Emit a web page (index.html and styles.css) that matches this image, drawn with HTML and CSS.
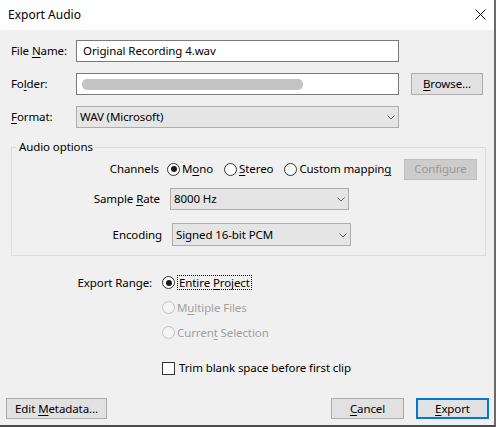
FILE: index.html
```html
<!DOCTYPE html>
<html>
<head>
<meta charset="utf-8">
<link rel="stylesheet" href="styles.css">
</head>
<body>
<div class="window">
  <div class="titlebar">
    <span class="title">Export Audio</span>
    <svg class="close" width="11" height="11" viewBox="0 0 11 11"><path d="M0.5 0.5 L10.5 10.5 M10.5 0.5 L0.5 10.5" stroke="#000" stroke-width="1" fill="none"/></svg>
  </div>
  <div class="content">
    <div class="filegrid">
      <span class="lbl">File <u>N</u>ame:</span>
      <div class="input"><span>Original Recording 4.wav</span></div>
      <span></span>
      <span class="lbl">Fo<u>l</u>der:</span>
      <div class="input"><div class="blur"></div></div>
      <button class="btn browse"><u>B</u>rowse...</button>
      <span class="lbl"><u>F</u>ormat:</span>
      <div class="select"><span>WAV (Microsoft)</span><svg class="chev" width="8" height="5" viewBox="0 0 8 5"><polyline points="0.5,0.5 4,4 7.5,0.5" fill="none" stroke="#606060" stroke-width="1"/></svg></div>
      <span></span>
    </div>

    <fieldset class="group">
      <legend>Audio options</legend>
      <div class="grow channels">
        <span class="glbl">Channels</span>
        <span class="opt"><span class="radio on"></span><span>M<u>o</u>no</span></span>
        <span class="opt"><span class="radio"></span><span><u>S</u>tereo</span></span>
        <span class="opt"><span class="radio"></span><span>Custom mappin<u>g</u></span></span>
        <button class="btn disabled configure">Configure</button>
      </div>
      <div class="grow rate">
        <span class="glbl">Sample <u>R</u>ate</span>
        <div class="select small"><span>8000 Hz</span><svg class="chev" width="8" height="5" viewBox="0 0 8 5"><polyline points="0.5,0.5 4,4 7.5,0.5" fill="none" stroke="#606060" stroke-width="1"/></svg></div>
      </div>
      <div class="grow enc">
        <span class="glbl">Encoding</span>
        <div class="select small tall"><span>Signed 16-bit PCM</span><svg class="chev" width="8" height="5" viewBox="0 0 8 5"><polyline points="0.5,0.5 4,4 7.5,0.5" fill="none" stroke="#606060" stroke-width="1"/></svg></div>
      </div>
    </fieldset>

    <div class="range">
      <span class="rlbl">Export Range:</span>
      <span class="opt"><span class="radio on"></span><span class="focus">Entire <u>P</u>roject</span></span>
      <span></span>
      <span class="opt off"><span class="radio"></span><span>M<u>u</u>ltiple Files</span></span>
      <span></span>
      <span class="opt off"><span class="radio"></span><span>Curren<u>t</u> Selection</span></span>
      <span></span>
      <span class="opt check-row"><span class="check"></span><span>Trim blank space before first clip</span></span>
    </div>

    <div class="footer">
      <button class="btn meta">Edit <u>M</u>etadata...</button>
      <span class="spacer"></span>
      <button class="btn cancel"><u>C</u>ancel</button>
      <button class="btn export default"><u>E</u>xport</button>
    </div>
  </div>
</div>
</body>
</html>
```
FILE: styles.css
```css
html, body {
  margin: 0;
  padding: 0;
}
body {
  width: 496px;
  height: 427px;
  overflow: hidden;
  font-family: "Noto Sans", "Open Sans", sans-serif;
  font-size: 11.5px;
  letter-spacing: -0.1px;
  line-height: 16px;
  color: #000;
  background: #f0f0f0;
}
u {
  text-decoration: underline;
  text-underline-offset: 2px;
  text-decoration-thickness: 1px;
}
.window {
  width: 496px;
  height: 427px;
  box-sizing: border-box;
  border-right: 2px solid #6a6a6a;
  border-bottom: 2px solid #4a4a4a;
  background: #f0f0f0;
  display: flex;
  flex-direction: column;
}
.titlebar {
  height: 30px;
  background: #fff;
  display: flex;
  align-items: center;
  justify-content: space-between;
  padding: 0 8px 0 8px;
  flex: none;
}
.title {
  font-size: 12px;
  letter-spacing: 0;
}
.close {
  display: block;
  margin-top: -1px;
}
.content {
  display: flex;
  flex-direction: column;
  padding-top: 10px;
}
.filegrid {
  display: grid;
  grid-template-columns: 65px 323px 84px;
  grid-template-rows: 22px 22px 22px;
  row-gap: 11px;
  padding-left: 11px;
  align-items: center;
}
.lbl {
  white-space: nowrap;
}
.input {
  height: 22px;
  box-sizing: border-box;
  border: 1px solid #7a7a7a;
  background: #fff;
  padding: 2px 6px;
  display: flex;
  align-items: center;
  white-space: nowrap;
}
.blur {
  width: 221px;
  height: 11px;
  margin-left: -1px;
  border-radius: 5px;
  background: #c4c4c4;
  filter: blur(0.6px);
}
.btn {
  font: inherit;
  letter-spacing: inherit;
  color: #000;
  background: #e1e1e1;
  border: 1px solid #adadad;
  height: 21px;
  padding: 0;
  box-sizing: border-box;
  line-height: 16px;
}
.browse {
  width: 72px;
  height: 22px;
  justify-self: end;
}
.select {
  height: 22px;
  box-sizing: border-box;
  border: 1px solid #adadad;
  background: #e5e5e5;
  padding: 0 3px;
  display: flex;
  align-items: center;
  justify-content: space-between;
  white-space: nowrap;
}
.select .chev {
  margin-top: 1px;
}
.select.small {
  width: 179px;
}
.select.tall {
  height: 23px;
}
.group {
  margin: 11px 8px 14px 11px;
  padding: 3px 0 9px 0;
  border: 1px solid #dcdcdc;
  min-width: 0;
  display: flex;
  flex-direction: column;
}
.group legend {
  margin-left: 5px;
  padding: 0 2px;
  line-height: 16px;
}
.grow {
  display: flex;
  align-items: center;
  height: 22px;
}
.glbl {
  width: 148px;
  text-align: right;
  white-space: nowrap;
  flex: none;
}
.channels .glbl {
  width: 147px;
  margin-right: 8px;
}
.rate {
  margin-top: 8px;
}
.rate .glbl {
  margin-right: 10px;
}
.enc {
  margin-top: 13px;
  height: 23px;
}
.enc .glbl {
  width: 150px;
  margin-right: 10px;
}
.opt {
  display: flex;
  align-items: center;
  white-space: nowrap;
  margin-right: 11px;
}
.radio {
  width: 13px;
  height: 13px;
  box-sizing: border-box;
  border: 1px solid #333;
  border-radius: 50%;
  background: #fff;
  margin-right: 2px;
  position: relative;
  flex: none;
}
.radio.on::after {
  content: "";
  position: absolute;
  left: 2.5px;
  top: 2.5px;
  width: 6px;
  height: 6px;
  border-radius: 50%;
  background: #1a1a1a;
}
.opt.off {
  color: #a0a0a0;
}
.opt.off .radio {
  border-color: #c2c2c2;
  background: #f4f4f4;
}
.configure {
  width: 73px;
  height: 21px;
  background: #cccccc;
  border-color: #bfbfbf;
  color: #9a9a9a;
  margin-left: auto;
  margin-right: 8px;
}
.range {
  display: grid;
  grid-template-columns: 162px auto;
  grid-template-rows: 25px 25px 25px 35px;
  align-items: center;
}
.rlbl {
  justify-self: end;
  padding-right: 10px;
  white-space: nowrap;
}
.focus {
  outline: 1px dotted #000;
  outline-offset: 0;
  padding: 0 1px;
  margin-left: 1px;
  line-height: 13px;
}
.check-row {
  align-self: end;
  height: 24px;
}
.check {
  width: 13px;
  height: 13px;
  box-sizing: border-box;
  border: 1px solid #333;
  background: #fff;
  margin-right: 4px;
  flex: none;
}
.footer {
  display: flex;
  align-items: center;
  padding: 0 5px 0 6px;
  margin-top: 18px;
}
.spacer {
  flex: 1;
}
.meta {
  width: 101px;
}
.cancel {
  width: 73px;
  margin-right: 12px;
}
.export {
  width: 73px;
}
.default {
  border: 1px solid #0078d7;
  box-shadow: inset 0 0 0 1px #0078d7;
}
```
